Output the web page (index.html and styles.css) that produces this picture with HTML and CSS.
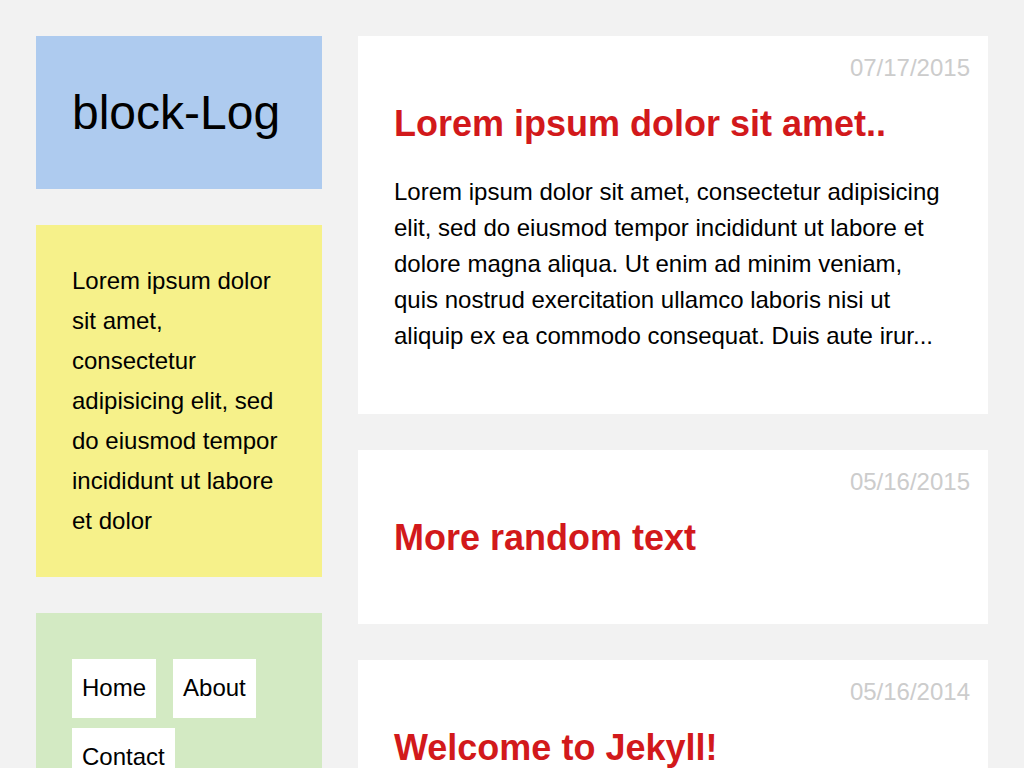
FILE: index.html
```html
<!DOCTYPE html>
<html lang="en">
<head>
<meta charset="utf-8">
<title>block-Log</title>
<link rel="stylesheet" href="styles.css">
</head>
<body>
<div class="page">
  <aside class="sidebar">
    <header class="block block-blue">
      <h1 class="logo">block-Log</h1>
    </header>
    <section class="block block-yellow">
      <p class="about">Lorem ipsum dolor sit amet, consectetur adipisicing elit, sed do eiusmod tempor incididunt ut labore et dolor</p>
    </section>
    <nav class="block block-green">
      <ul class="nav">
        <li><a href="#">Home</a></li>
        <li><a href="#">About</a></li>
        <li><a href="#">Contact</a></li>
      </ul>
    </nav>
  </aside>
  <main class="posts">
    <article class="post">
      <div class="post-date">07/17/2015</div>
      <h2 class="post-title">Lorem ipsum dolor sit amet..</h2>
      <p class="post-excerpt">Lorem ipsum dolor sit amet, consectetur adipisicing elit, sed do eiusmod tempor incididunt ut labore et dolore magna aliqua. Ut enim ad minim veniam, quis nostrud exercitation ullamco laboris nisi ut aliquip ex ea commodo consequat. Duis aute irur...</p>
    </article>
    <article class="post">
      <div class="post-date">05/16/2015</div>
      <h2 class="post-title">More random text</h2>
    </article>
    <article class="post">
      <div class="post-date">05/16/2014</div>
      <h2 class="post-title">Welcome to Jekyll!</h2>
      <p class="post-excerpt">You’ll find this post in your _posts directory. Go ahead and edit it and re-build the site to see your changes...</p>
    </article>
  </main>
</div>
</body>
</html>
```
FILE: styles.css
```css
* { box-sizing: border-box; }

html, body {
  margin: 0;
  padding: 0;
  background: #f2f2f2;
  font-family: "Liberation Sans", Arial, Helvetica, sans-serif;
  color: #000;
}

.page {
  display: grid;
  grid-template-columns: 286px 630px;
  column-gap: 36px;
  align-items: start;
  padding: 36px;
}

.sidebar {
  display: flex;
  flex-direction: column;
  gap: 36px;
}

.block {
  padding: 36px;
}

.block-blue { background: #aecbef; }
.block-yellow { background: #f6f18a; }
.block-green { background: #d3eac3; padding-top: 46px; }

.logo {
  margin: 0;
  font-size: 48px;
  font-weight: normal;
  line-height: 81px;
}

.about {
  margin: 0;
  font-size: 24px;
  line-height: 40px;
}

.nav {
  list-style: none;
  margin: 0;
  padding: 0;
  display: flex;
  flex-wrap: wrap;
  column-gap: 17px;
  row-gap: 10px;
}

.nav a {
  display: block;
  background: #fff;
  color: #000;
  text-decoration: none;
  font-size: 24px;
  line-height: 36px;
  padding: 11px 10px 12px;
}

.posts {
  display: flex;
  flex-direction: column;
  gap: 36px;
}

.post {
  background: #fff;
  padding: 0 36px 36px;
}

.post-date {
  margin-right: -18px;
  padding-top: 14px;
  text-align: right;
  font-size: 24px;
  line-height: 36px;
  color: #cccccc;
}

.post-title {
  margin: 11px 0 23px;
  font-size: 36px;
  line-height: 54px;
  font-weight: bold;
  color: #d2191b;
}

.post-excerpt {
  margin: 0 0 24px;
  font-size: 24px;
  line-height: 36px;
}
```
